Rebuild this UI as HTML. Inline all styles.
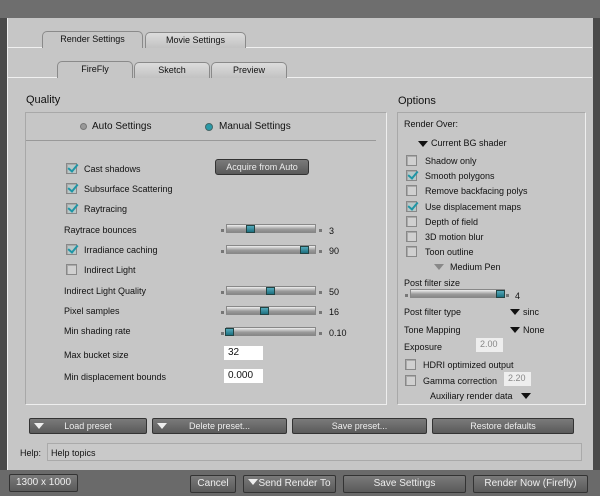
<!DOCTYPE html><html><head><style>
body{margin:0;width:600px;height:496px;background:#4a4a4a;font-family:"Liberation Sans",sans-serif;font-size:9px;color:#111;position:relative;overflow:hidden}
div,span{position:absolute;box-sizing:border-box}
.t{white-space:nowrap}
.main{left:7px;top:18px;width:586px;height:452px;background:#c6c6c6;border-left:1px solid #eee}
.tab{height:16px;background:linear-gradient(#dcdcdc,#c2c2c2);border:1px solid #8a8a8a;border-bottom:none;border-radius:5px 5px 0 0;text-align:center;line-height:15px;font-size:9px}
.tab.a{background:#c6c6c6;height:17px}
.hl{height:1px;background:#f0f0f0}
.box{border:1px solid #a8a8a8;border-right-color:#eee;border-bottom-color:#eee;background:#c6c6c6}
.cb{width:11px;height:11px;border:1px solid #888;background:#d0d0d0;box-shadow:inset 1px 1px 0 #aaa}
.cb.on::after{content:"";position:absolute;left:3px;top:-2px;width:4px;height:8px;border:solid #1f95a5;border-width:0 2px 2px 0;transform:rotate(40deg)}
.cb.on{background:#b8c8c8}
.tr{width:90px;height:9px;background:linear-gradient(#eee,#9a9a9a 60%,#888);border:1px solid #888}
.kn{width:9px;height:8px;background:linear-gradient(#5ab,#1d6f7f);border:1px solid #244}
.dot{width:3px;height:3px;background:#777}
.btn{height:16px;background:linear-gradient(#7a7a7a,#5a5a5a);color:#eee;border:1px solid #333;border-radius:2px;text-align:center;line-height:14px;font-size:9px}
.tri{width:0;height:0;border-left:5px solid transparent;border-right:5px solid transparent;border-top:6px solid #111}
.fld{background:#fff;height:14px;line-height:13px;padding-left:4px;font-size:10px}
</style></head><body>
<div style="left:0;top:0;width:600px;height:18px;background:#6e6e6e"></div>
<div class="main"></div>
<div class="tab a" style="left:42px;top:31px;width:101px">Render Settings</div>
<div class="tab" style="left:145px;top:32px;width:101px">Movie Settings</div>
<div class="hl" style="left:8px;top:47px;width:34px"></div><div class="hl" style="left:246px;top:47px;width:346px"></div>
<div class="tab a" style="left:57px;top:61px;width:76px">FireFly</div>
<div class="tab" style="left:134px;top:62px;width:76px">Sketch</div>
<div class="tab" style="left:211px;top:62px;width:76px">Preview</div>
<div class="hl" style="left:8px;top:77px;width:49px"></div><div class="hl" style="left:287px;top:77px;width:305px"></div>
<div class="t" style="left:26px;top:94px;font-size:11px">Quality</div>
<div class="t" style="left:398px;top:95px;font-size:11px">Options</div>
<div class="box" style="left:25px;top:112px;width:362px;height:293px"></div>
<div class="box" style="left:397px;top:112px;width:189px;height:293px"></div>
<div style="left:26px;top:140px;width:350px;height:1px;background:#999"></div>
<div style="left:80px;top:123px;width:7px;height:7px;border-radius:50%;background:#999;border:1px solid #777"></div>
<div class="t" style="left:92px;top:121px;font-size:10px">Auto Settings</div>
<div style="left:205px;top:123px;width:8px;height:8px;border-radius:50%;background:#2a9aa8;border:1px solid #466"></div>
<div class="t" style="left:219px;top:121px;font-size:10px">Manual Settings</div>
<div class="cb on" style="left:66px;top:163px"></div><div class="t" style="left:84px;top:164px">Cast shadows</div>
<div class="btn" style="left:215px;top:159px;width:94px;border-radius:3px">Acquire from Auto</div>
<div class="cb on" style="left:66px;top:183px"></div><div class="t" style="left:84px;top:184px">Subsurface Scattering</div>
<div class="cb on" style="left:66px;top:203px"></div><div class="t" style="left:84px;top:204px">Raytracing</div>
<div class="t" style="left:64px;top:225px">Raytrace bounces</div>
<div class="cb on" style="left:66px;top:244px"></div><div class="t" style="left:84px;top:245px">Irradiance caching</div>
<div class="cb" style="left:66px;top:264px"></div><div class="t" style="left:84px;top:265px">Indirect Light</div>
<div class="t" style="left:64px;top:286px">Indirect Light Quality</div>
<div class="t" style="left:64px;top:306px">Pixel samples</div>
<div class="t" style="left:64px;top:326px">Min shading rate</div>
<div class="t" style="left:64px;top:350px">Max bucket size</div>
<div class="t" style="left:64px;top:372px">Min displacement bounds</div>
<div class="fld" style="left:224px;top:346px;width:39px">32</div>
<div class="fld" style="left:224px;top:369px;width:39px">0.000</div>
<div class="dot" style="left:221px;top:229px"></div><div class="tr" style="left:226px;top:224px"></div><div class="kn" style="left:246px;top:225px"></div><div class="dot" style="left:319px;top:229px"></div><div class="t" style="left:329px;top:226px">3</div>
<div class="dot" style="left:221px;top:250px"></div><div class="tr" style="left:226px;top:245px"></div><div class="kn" style="left:300px;top:246px"></div><div class="dot" style="left:319px;top:250px"></div><div class="t" style="left:329px;top:246px">90</div>
<div class="dot" style="left:221px;top:291px"></div><div class="tr" style="left:226px;top:286px"></div><div class="kn" style="left:266px;top:287px"></div><div class="dot" style="left:319px;top:291px"></div><div class="t" style="left:329px;top:287px">50</div>
<div class="dot" style="left:221px;top:311px"></div><div class="tr" style="left:226px;top:306px"></div><div class="kn" style="left:260px;top:307px"></div><div class="dot" style="left:319px;top:311px"></div><div class="t" style="left:329px;top:307px">16</div>
<div class="dot" style="left:221px;top:332px"></div><div class="tr" style="left:226px;top:327px"></div><div class="kn" style="left:225px;top:328px"></div><div class="dot" style="left:319px;top:332px"></div><div class="t" style="left:329px;top:328px">0.10</div>
<div class="t" style="left:404px;top:119px">Render Over:</div>
<div class="tri" style="left:418px;top:141px"></div><div class="t" style="left:431px;top:138px">Current BG shader</div>
<div class="cb" style="left:406px;top:155px"></div><div class="t" style="left:425px;top:156px">Shadow only</div>
<div class="cb on" style="left:406px;top:170px"></div><div class="t" style="left:425px;top:171px">Smooth polygons</div>
<div class="cb" style="left:406px;top:185px"></div><div class="t" style="left:425px;top:186px">Remove backfacing polys</div>
<div class="cb on" style="left:406px;top:201px"></div><div class="t" style="left:425px;top:202px">Use displacement maps</div>
<div class="cb" style="left:406px;top:216px"></div><div class="t" style="left:425px;top:217px">Depth of field</div>
<div class="cb" style="left:406px;top:231px"></div><div class="t" style="left:425px;top:232px">3D motion blur</div>
<div class="cb" style="left:406px;top:246px"></div><div class="t" style="left:425px;top:247px">Toon outline</div>
<div class="tri" style="left:434px;top:264px;border-top-color:#888"></div><div class="t" style="left:450px;top:262px">Medium Pen</div>
<div class="t" style="left:404px;top:278px">Post filter size</div>
<div class="dot" style="left:405px;top:294px"></div><div class="tr" style="left:410px;top:289px;width:95px"></div><div class="kn" style="left:496px;top:290px"></div><div class="dot" style="left:506px;top:294px"></div><div class="t" style="left:515px;top:291px">4</div>
<div class="t" style="left:404px;top:307px">Post filter type</div>
<div class="tri" style="left:510px;top:309px"></div><div class="t" style="left:523px;top:307px">sinc</div>
<div class="t" style="left:404px;top:325px">Tone Mapping</div>
<div class="tri" style="left:510px;top:327px"></div><div class="t" style="left:523px;top:325px">None</div>
<div class="t" style="left:404px;top:342px">Exposure</div>
<div class="fld" style="left:476px;top:338px;width:27px;background:#eee;color:#888;font-size:9px">2.00</div>
<div class="cb" style="left:405px;top:359px"></div><div class="t" style="left:423px;top:360px">HDRI optimized output</div>
<div class="cb" style="left:405px;top:375px"></div><div class="t" style="left:423px;top:376px">Gamma correction</div>
<div class="fld" style="left:504px;top:372px;width:27px;background:#eee;color:#888;font-size:9px">2.20</div>
<div class="t" style="left:430px;top:391px">Auxiliary render data</div>
<div class="tri" style="left:521px;top:393px"></div>
<div class="btn" style="left:29px;top:418px;width:118px">Load preset</div><div class="tri" style="left:34px;top:423px;border-top-color:#eee"></div>
<div class="btn" style="left:152px;top:418px;width:135px">Delete preset...</div><div class="tri" style="left:157px;top:423px;border-top-color:#eee"></div>
<div class="btn" style="left:292px;top:418px;width:135px">Save preset...</div>
<div class="btn" style="left:432px;top:418px;width:142px">Restore defaults</div>
<div class="t" style="left:20px;top:448px">Help:</div>
<div style="left:47px;top:443px;width:535px;height:18px;border:1px solid #aaa;background:#c9c9c9"></div>
<div class="t" style="left:51px;top:448px">Help topics</div>
<div style="left:0;top:470px;width:600px;height:26px;background:#6a6a6a"></div>
<div class="btn" style="left:9px;top:474px;width:69px;height:18px;line-height:16px;font-size:10px">1300 x 1000</div>
<div class="btn" style="left:190px;top:475px;width:46px;height:18px;line-height:16px;font-size:10px">Cancel</div>
<div class="btn" style="left:243px;top:475px;width:93px;height:18px;line-height:16px;font-size:10px;padding-left:10px">Send Render To</div><div class="tri" style="left:248px;top:479px;border-top-color:#eee"></div>
<div class="btn" style="left:343px;top:475px;width:123px;height:18px;line-height:16px;font-size:10px">Save Settings</div>
<div class="btn" style="left:473px;top:475px;width:115px;height:18px;line-height:16px;font-size:10px">Render Now (Firefly)</div>
</body></html>
